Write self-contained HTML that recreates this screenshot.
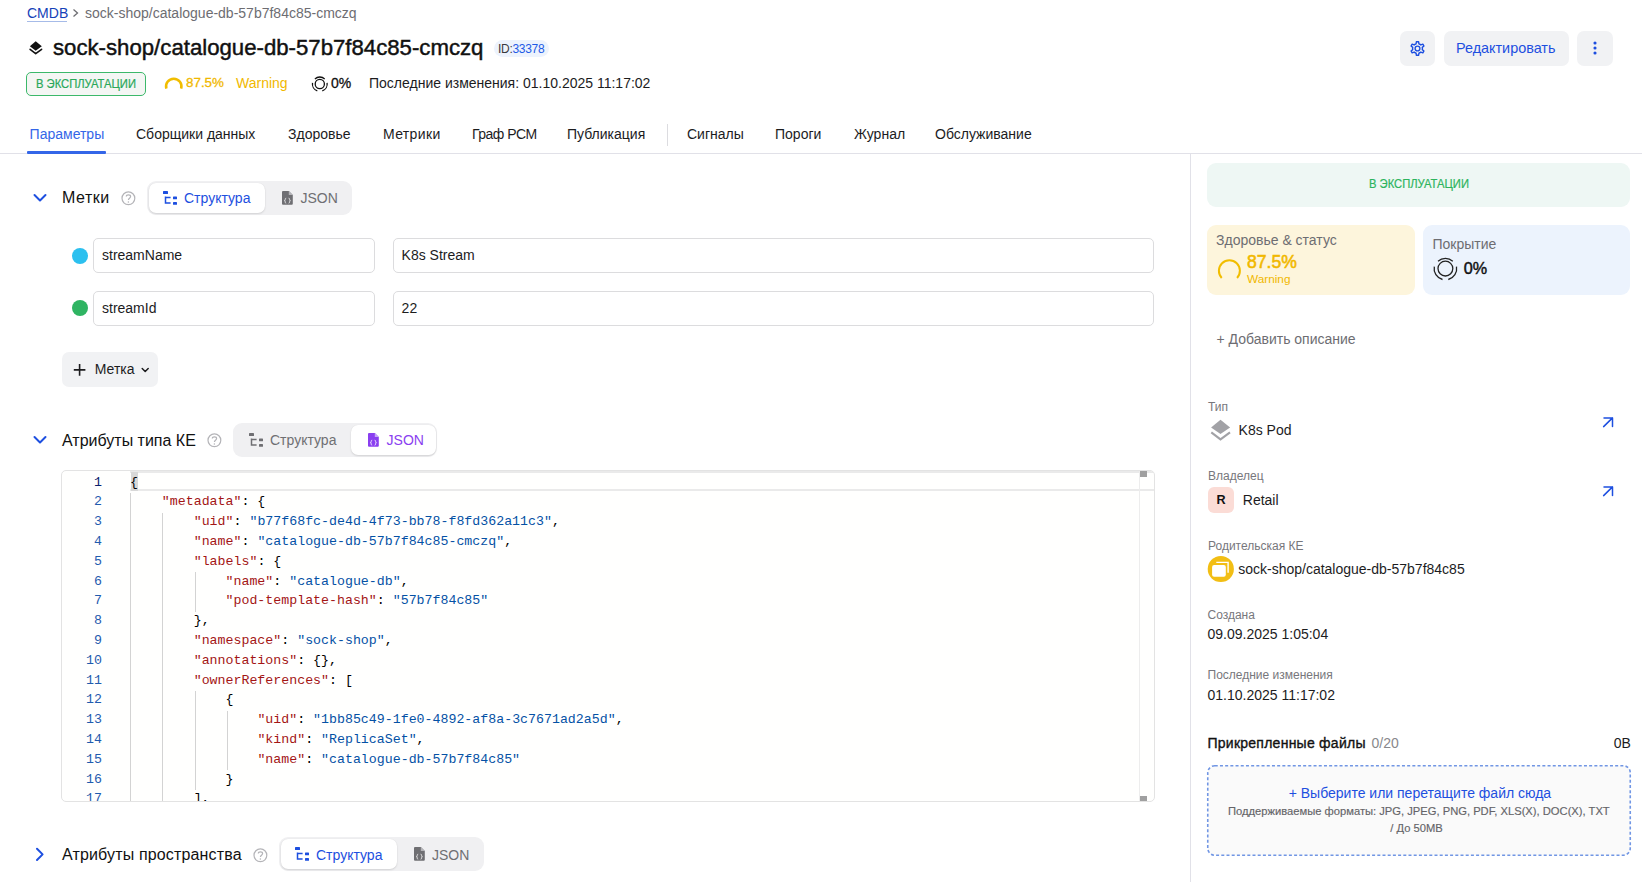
<!DOCTYPE html>
<html><head><meta charset="utf-8">
<style>
*{box-sizing:border-box;margin:0;padding:0}
html,body{width:1642px;height:882px;overflow:hidden;background:#fff}
body{position:relative;font-family:"Liberation Sans",sans-serif;color:#1c1c1e;font-size:14px}
.t{position:absolute;line-height:1;white-space:nowrap}
.a{position:absolute}
.s12{font-size:12px}.s14{font-size:14px}.s16{font-size:16px}
.grey{color:#707075}
.blue{color:#1d4fe0}
svg{position:absolute;overflow:visible}
/* header */
.btn{position:absolute;background:#f1f2f4;border-radius:7px;height:35.2px;top:30.5px}
.seg{position:absolute;background:#f0f0f2;border-radius:9px;height:34px}
.seg .on{position:absolute;top:2px;bottom:2px;background:#fff;border-radius:7px;box-shadow:0 1px 2px rgba(0,0,0,.12),0 0 1px rgba(0,0,0,.08)}
.inp{position:absolute;height:34.5px;border:1px solid #dcdcde;border-radius:5px;background:#fff}
.code .ln{position:absolute;width:40px;text-align:right;font-family:"Liberation Mono",monospace;font-size:13.27px;line-height:19.8px;color:#1f5bae}
.code .cl{position:absolute;left:131px;font-family:"Liberation Mono",monospace;font-size:13.27px;line-height:19.8px;white-space:pre;color:#000}
.k{color:#a31515}.v{color:#0451a5}
.guide{position:absolute;width:1px;background:#d3d3d3}
</style></head><body>

<!-- breadcrumb -->
<div class="t s14" style="left:27px;top:6.3px;color:#1541b8">CMDB</div>
<div class="a" style="left:27px;top:21px;width:40px;height:1px;background:#a6bbe8"></div>
<svg style="left:72px;top:8px" width="8" height="10"><path d="M1.5 1.5 L5.5 5 L1.5 8.5" fill="none" stroke="#6d6d72" stroke-width="1.3"/></svg>
<div class="t s14" style="left:85px;top:6.3px;color:#6d6d72">sock-shop/catalogue-db-57b7f84c85-cmczq</div>

<!-- title -->
<svg style="left:28px;top:40px" width="16" height="16"><path d="M7.7 1.2 L13.8 6.2 L7.7 10.7 L1.9 6.2 Z" fill="#111"/><path d="M2.1 9.3 L7.7 13.7 L13.6 9.3" fill="none" stroke="#111" stroke-width="1.6" stroke-linejoin="round" stroke-linecap="round"/></svg>
<div class="t" style="left:53px;top:37.1px;font-size:22.2px;color:#111;-webkit-text-stroke:0.45px #111">sock-shop/catalogue-db-57b7f84c85-cmczq</div>
<div class="a" style="left:494px;top:39.5px;width:55px;height:17px;border-radius:8.5px;background:#edf3fd"></div>
<div class="t s12" style="left:498px;top:42.5px;color:#3a3a3e;letter-spacing:-0.3px">ID:<span style="color:#1d5ae6">33378</span></div>

<!-- header buttons -->
<div class="btn" style="left:1400px;width:35px"></div>
<div class="btn" style="left:1444px;width:125px"></div>
<div class="btn" style="left:1577px;width:36px"></div>
<div class="t s14 blue" style="left:1456px;top:41px;font-size:14.4px">Редактировать</div>
<svg style="left:1593px;top:40px" width="4" height="16"><circle cx="2" cy="3" r="1.55" fill="#1d4fe0"/><circle cx="2" cy="8" r="1.55" fill="#1d4fe0"/><circle cx="2" cy="13" r="1.55" fill="#1d4fe0"/></svg>

<!-- status row -->
<div class="a" style="left:26px;top:72px;width:120px;height:24px;border:1px solid #3cb86a;border-radius:5px;background:#f4f6f4"></div>
<div class="t s12" style="left:36px;top:78.1px;color:#2aa85a;transform:scaleX(0.935);transform-origin:0 0;-webkit-text-stroke:0.2px #2aa85a">В ЭКСПЛУАТАЦИИ</div>
<svg style="left:164px;top:76px" width="20" height="16"><path d="M2.37 12.55 A7.7 7.7 0 1 1 17.13 12.55" fill="none" stroke="#f1bd00" stroke-width="2.5"/></svg>
<div class="t s14" style="left:186px;top:76.2px;color:#f1b800;font-size:13.4px;-webkit-text-stroke:0.3px #f1b800">87.5%</div>
<div class="t s14" style="left:236px;top:75.9px;color:#f1b800">Warning</div>
<div class="t s14" style="left:331px;top:75.9px;color:#111;-webkit-text-stroke:0.3px #111">0%</div>
<div class="t s14" style="left:369px;top:75.9px;color:#1c1c1e">Последние изменения: 01.10.2025 11:17:02</div>


<svg style="left:1408.8px;top:39.6px" width="17" height="17"><path d="M6.06 4.25 L7.07 3.81 L7.42 1.68 L9.58 1.68 L9.93 3.81 L10.96 4.26 L11.84 4.92 L13.86 4.16 L14.94 6.03 L13.27 7.40 L13.40 8.51 L13.27 9.60 L14.94 10.97 L13.86 12.84 L11.84 12.08 L10.94 12.75 L9.93 13.19 L9.58 15.32 L7.42 15.32 L7.07 13.19 L6.04 12.74 L5.16 12.08 L3.14 12.84 L2.06 10.97 L3.73 9.60 L3.60 8.49 L3.73 7.40 L2.06 6.03 L3.14 4.16 L5.16 4.92 Z" fill="none" stroke="#1d4fe0" stroke-width="1.4" stroke-linejoin="round"/><circle cx="8.5" cy="8.5" r="2.4" fill="none" stroke="#1d4fe0" stroke-width="1.4"/></svg>
<svg style="left:310px;top:75px" width="20" height="18"><circle cx="9.8" cy="9" r="4.6" fill="none" stroke="#111" stroke-width="1.3"/><path d="M4.9 3.9 A7.3 7.3 0 0 1 14.7 3.9 M2.5 7.9 A7.3 7.3 0 0 0 7.3 15.9 M12.3 15.9 A7.3 7.3 0 0 0 17.1 7.9" fill="none" stroke="#111" stroke-width="1.3"/></svg>
<!-- tabs -->
<div class="t s14" style="left:29.6px;top:127.2px;color:#3466e8">Параметры</div>
<div class="t s14" style="left:136px;top:127.2px">Сборщики данных</div>
<div class="t s14" style="left:288px;top:127.2px">Здоровье</div>
<div class="t s14" style="left:383px;top:127.2px;letter-spacing:0.35px">Метрики</div>
<div class="t s14" style="left:472px;top:127.2px;letter-spacing:-0.5px">Граф РСМ</div>
<div class="t s14" style="left:567px;top:127.2px">Публикация</div>
<div class="a" style="left:667px;top:124px;width:1px;height:22px;background:#dcdce0"></div>
<div class="t s14" style="left:687px;top:127.2px">Сигналы</div>
<div class="t s14" style="left:775px;top:127.2px">Пороги</div>
<div class="t s14" style="left:854px;top:127.2px">Журнал</div>
<div class="t s14" style="left:935px;top:127.2px">Обслуживание</div>
<div class="a" style="left:0;top:153px;width:1642px;height:1px;background:#e1e1e8"></div>
<div class="a" style="left:27px;top:151px;width:79px;height:2.5px;background:#3466e8;border-radius:1px"></div>
<div class="a" style="left:1190px;top:154px;width:1px;height:728px;background:#e1e1e8"></div>

<!--MAIN-->
<!-- Метки section -->
<svg style="left:33px;top:193px" width="14" height="10"><path d="M1.5 2 L7 7.5 L12.5 2" fill="none" stroke="#1d4fe0" stroke-width="2" stroke-linecap="round" stroke-linejoin="round"/></svg>
<div class="t s16" style="left:62px;top:189.6px;color:#111;letter-spacing:0.5px">Метки</div>
<svg style="left:121px;top:191px" width="15" height="15"><circle cx="7.4" cy="7.3" r="6.4" fill="none" stroke="#b4b4b8" stroke-width="1.2"/><path d="M5.3 5.6 C5.3 3.2 9.6 3.2 9.6 5.6 C9.6 7.2 7.4 7.2 7.4 9" fill="none" stroke="#b4b4b8" stroke-width="1.2"/><circle cx="7.4" cy="10.9" r="0.75" fill="#b4b4b8"/></svg>
<div class="seg" style="left:147px;top:181px;width:205px">
  <div class="on" style="left:2px;width:116px"></div>
</div>
<svg style="left:162px;top:190px" width="17" height="16"><rect x="1" y="1" width="5" height="3" rx="0.6" fill="#1d4fe0"/><path d="M3.5 6.5 V13 H8.6 M3.5 7.5 H8.6" fill="none" stroke="#1d4fe0" stroke-width="1.5"/><rect x="11" y="6.5" width="4" height="2.8" rx="0.6" fill="#1d4fe0"/><rect x="11" y="12" width="4" height="2.8" rx="0.6" fill="#1d4fe0"/></svg>
<div class="t s14 blue" style="left:184px;top:190.9px">Структура</div>
<svg style="left:281px;top:190px" width="13" height="16"><path d="M2 1 H7.8 L11.8 5 V13.8 Q11.8 14.8 10.8 14.8 H2 Q1 14.8 1 13.8 V2 Q1 1 2 1 Z" fill="#6f6f73"/><path d="M7.8 1 V5 H11.8 Z" fill="#b4b4b8"/><path d="M5.2 8.2 Q4.2 8.2 4.2 9.2 V10 Q4.2 10.7 3.4 10.7 Q4.2 10.7 4.2 11.4 V12.2 Q4.2 13.2 5.2 13.2 M7.6 8.2 Q8.6 8.2 8.6 9.2 V10 Q8.6 10.7 9.4 10.7 Q8.6 10.7 8.6 11.4 V12.2 Q8.6 13.2 7.6 13.2" fill="none" stroke="#e6e6e8" stroke-width="0.9"/></svg>
<div class="t s14" style="left:300.5px;top:190.9px;color:#6f6f73">JSON</div>

<!-- label rows -->
<div class="a" style="left:72px;top:248px;width:16px;height:16px;border-radius:50%;background:#2cc0ef"></div>
<div class="inp" style="left:93px;top:238px;width:282px"></div>
<div class="t s14" style="left:102px;top:247.9px">streamName</div>
<div class="inp" style="left:392.5px;top:238px;width:761px"></div>
<div class="t s14" style="left:401.6px;top:247.9px">K8s Stream</div>
<div class="a" style="left:72px;top:300px;width:16px;height:16px;border-radius:50%;background:#2fb462"></div>
<div class="inp" style="left:93px;top:291px;width:282px"></div>
<div class="t s14" style="left:102px;top:300.9px">streamId</div>
<div class="inp" style="left:392.5px;top:291px;width:761px"></div>
<div class="t s14" style="left:401.6px;top:300.9px">22</div>

<!-- + Метка -->
<div class="a" style="left:62px;top:352px;width:96px;height:35px;border-radius:7px;background:#f1f2f4"></div>
<svg style="left:73px;top:363px" width="14" height="14"><path d="M6.6 1 V12.8 M0.8 6.9 H12.4" fill="none" stroke="#1c1c1e" stroke-width="1.6"/></svg>
<div class="t s14" style="left:94.8px;top:362.4px">Метка</div>
<svg style="left:141px;top:367px" width="9" height="7"><path d="M1.2 1.5 L4.2 4.5 L7.2 1.5" fill="none" stroke="#1c1c1e" stroke-width="1.5" stroke-linecap="round" stroke-linejoin="round"/></svg>

<!-- Атрибуты типа КЕ -->
<svg style="left:33px;top:435px" width="14" height="10"><path d="M1.5 2 L7 7.5 L12.5 2" fill="none" stroke="#1d4fe0" stroke-width="2" stroke-linecap="round" stroke-linejoin="round"/></svg>
<div class="t s16" style="left:62px;top:433px;color:#111">Атрибуты типа КЕ</div>
<svg style="left:207px;top:433px" width="15" height="15"><circle cx="7.4" cy="7.3" r="6.4" fill="none" stroke="#b4b4b8" stroke-width="1.2"/><path d="M5.3 5.6 C5.3 3.2 9.6 3.2 9.6 5.6 C9.6 7.2 7.4 7.2 7.4 9" fill="none" stroke="#b4b4b8" stroke-width="1.2"/><circle cx="7.4" cy="10.9" r="0.75" fill="#b4b4b8"/></svg>
<div class="seg" style="left:233px;top:423px;width:204px">
  <div class="on" style="left:118px;width:85px"></div>
</div>
<svg style="left:248px;top:432px" width="17" height="16"><rect x="1" y="1" width="5" height="3" rx="0.6" fill="#6f6f73"/><path d="M3.5 6.5 V13 H8.6 M3.5 7.5 H8.6" fill="none" stroke="#6f6f73" stroke-width="1.5"/><rect x="11" y="6.5" width="4" height="2.8" rx="0.6" fill="#6f6f73"/><rect x="11" y="12" width="4" height="2.8" rx="0.6" fill="#6f6f73"/></svg>
<div class="t s14" style="left:270px;top:432.8px;color:#6f6f73">Структура</div>
<svg style="left:367px;top:432px" width="13" height="16"><path d="M2 1 H7.8 L11.8 5 V13.8 Q11.8 14.8 10.8 14.8 H2 Q1 14.8 1 13.8 V2 Q1 1 2 1 Z" fill="#8a3ff0"/><path d="M7.8 1 V5 H11.8 Z" fill="#c6a6f7"/><path d="M5.2 8.2 Q4.2 8.2 4.2 9.2 V10 Q4.2 10.7 3.4 10.7 Q4.2 10.7 4.2 11.4 V12.2 Q4.2 13.2 5.2 13.2 M7.6 8.2 Q8.6 8.2 8.6 9.2 V10 Q8.6 10.7 9.4 10.7 Q8.6 10.7 8.6 11.4 V12.2 Q8.6 13.2 7.6 13.2" fill="none" stroke="#efe6fd" stroke-width="0.9"/></svg>
<div class="t s14" style="left:386.6px;top:432.8px;color:#8a3ff0">JSON</div>

<!-- editor -->
<div class="a code" style="left:61px;top:470px;width:1094px;height:332.3px;border:1px solid #e3e3e3;border-radius:5px;background:#fffffe;overflow:hidden">
  <div class="a" style="left:68px;top:0px;width:1030px;height:20px;border-top:2px solid #eaeaea;border-bottom:2px solid #eaeaea"></div>
  <div class="a" style="left:69px;top:1px;width:6.7px;height:19px;background:#d8d8d8"></div>
  <div class="guide" style="left:67.6px;top:22.10px;height:309.90px"></div><div class="guide" style="left:100.4px;top:41.90px;height:290.10px"></div><div class="guide" style="left:132.5px;top:101.30px;height:39.60px"></div><div class="guide" style="left:132.5px;top:220.10px;height:99.00px"></div><div class="guide" style="left:164.6px;top:239.90px;height:59.40px"></div>
  <div class="ln" style="left:0;top:1.60px;color:#0b216f">1</div>
<div class="cl" style="left:68px;top:1.60px">{</div>
<div class="ln" style="left:0;top:21.40px;color:#1f5bae">2</div>
<div class="cl" style="left:68px;top:21.40px">    <span class="k">"metadata"</span>: {</div>
<div class="ln" style="left:0;top:41.20px;color:#1f5bae">3</div>
<div class="cl" style="left:68px;top:41.20px">        <span class="k">"uid"</span>: <span class="v">"b77f68fc-de4d-4f73-bb78-f8fd362a11c3"</span>,</div>
<div class="ln" style="left:0;top:61.00px;color:#1f5bae">4</div>
<div class="cl" style="left:68px;top:61.00px">        <span class="k">"name"</span>: <span class="v">"catalogue-db-57b7f84c85-cmczq"</span>,</div>
<div class="ln" style="left:0;top:80.80px;color:#1f5bae">5</div>
<div class="cl" style="left:68px;top:80.80px">        <span class="k">"labels"</span>: {</div>
<div class="ln" style="left:0;top:100.60px;color:#1f5bae">6</div>
<div class="cl" style="left:68px;top:100.60px">            <span class="k">"name"</span>: <span class="v">"catalogue-db"</span>,</div>
<div class="ln" style="left:0;top:120.40px;color:#1f5bae">7</div>
<div class="cl" style="left:68px;top:120.40px">            <span class="k">"pod-template-hash"</span>: <span class="v">"57b7f84c85"</span></div>
<div class="ln" style="left:0;top:140.20px;color:#1f5bae">8</div>
<div class="cl" style="left:68px;top:140.20px">        },</div>
<div class="ln" style="left:0;top:160.00px;color:#1f5bae">9</div>
<div class="cl" style="left:68px;top:160.00px">        <span class="k">"namespace"</span>: <span class="v">"sock-shop"</span>,</div>
<div class="ln" style="left:0;top:179.80px;color:#1f5bae">10</div>
<div class="cl" style="left:68px;top:179.80px">        <span class="k">"annotations"</span>: {},</div>
<div class="ln" style="left:0;top:199.60px;color:#1f5bae">11</div>
<div class="cl" style="left:68px;top:199.60px">        <span class="k">"ownerReferences"</span>: [</div>
<div class="ln" style="left:0;top:219.40px;color:#1f5bae">12</div>
<div class="cl" style="left:68px;top:219.40px">            {</div>
<div class="ln" style="left:0;top:239.20px;color:#1f5bae">13</div>
<div class="cl" style="left:68px;top:239.20px">                <span class="k">"uid"</span>: <span class="v">"1bb85c49-1fe0-4892-af8a-3c7671ad2a5d"</span>,</div>
<div class="ln" style="left:0;top:259.00px;color:#1f5bae">14</div>
<div class="cl" style="left:68px;top:259.00px">                <span class="k">"kind"</span>: <span class="v">"ReplicaSet"</span>,</div>
<div class="ln" style="left:0;top:278.80px;color:#1f5bae">15</div>
<div class="cl" style="left:68px;top:278.80px">                <span class="k">"name"</span>: <span class="v">"catalogue-db-57b7f84c85"</span></div>
<div class="ln" style="left:0;top:298.60px;color:#1f5bae">16</div>
<div class="cl" style="left:68px;top:298.60px">            }</div>
<div class="ln" style="left:0;top:318.40px;color:#1f5bae">17</div>
<div class="cl" style="left:68px;top:318.40px">        ],</div>
  <div class="a" style="left:1077px;top:0;width:1px;height:333px;background:#ededed"></div>
  <div class="a" style="left:1077.6px;top:0;width:7px;height:6px;background:#a0a0a0"></div>
  <div class="a" style="left:1077.6px;top:324.5px;width:7px;height:6px;background:#a0a0a0"></div>
</div>

<!-- Атрибуты пространства -->
<svg style="left:34px;top:847px" width="12" height="15"><path d="M3 1.8 L8.6 7.4 L3 13" fill="none" stroke="#1d4fe0" stroke-width="2" stroke-linecap="round" stroke-linejoin="round"/></svg>
<div class="t s16" style="left:62px;top:847.1px;color:#111;letter-spacing:0.15px">Атрибуты пространства</div>
<svg style="left:253px;top:848px" width="15" height="15"><circle cx="7.4" cy="7.3" r="6.4" fill="none" stroke="#b4b4b8" stroke-width="1.2"/><path d="M5.3 5.6 C5.3 3.2 9.6 3.2 9.6 5.6 C9.6 7.2 7.4 7.2 7.4 9" fill="none" stroke="#b4b4b8" stroke-width="1.2"/><circle cx="7.4" cy="10.9" r="0.75" fill="#b4b4b8"/></svg>
<div class="seg" style="left:279px;top:837px;width:205px">
  <div class="on" style="left:2px;width:116px"></div>
</div>
<svg style="left:294px;top:846px" width="17" height="16"><rect x="1" y="1" width="5" height="3" rx="0.6" fill="#1d4fe0"/><path d="M3.5 6.5 V13 H8.6 M3.5 7.5 H8.6" fill="none" stroke="#1d4fe0" stroke-width="1.5"/><rect x="11" y="6.5" width="4" height="2.8" rx="0.6" fill="#1d4fe0"/><rect x="11" y="12" width="4" height="2.8" rx="0.6" fill="#1d4fe0"/></svg>
<div class="t s14 blue" style="left:316px;top:847.9px">Структура</div>
<svg style="left:413px;top:846px" width="13" height="16"><path d="M2 1 H7.8 L11.8 5 V13.8 Q11.8 14.8 10.8 14.8 H2 Q1 14.8 1 13.8 V2 Q1 1 2 1 Z" fill="#6f6f73"/><path d="M7.8 1 V5 H11.8 Z" fill="#b4b4b8"/><path d="M5.2 8.2 Q4.2 8.2 4.2 9.2 V10 Q4.2 10.7 3.4 10.7 Q4.2 10.7 4.2 11.4 V12.2 Q4.2 13.2 5.2 13.2 M7.6 8.2 Q8.6 8.2 8.6 9.2 V10 Q8.6 10.7 9.4 10.7 Q8.6 10.7 8.6 11.4 V12.2 Q8.6 13.2 7.6 13.2" fill="none" stroke="#e6e6e8" stroke-width="0.9"/></svg>
<div class="t s14" style="left:432px;top:847.9px;color:#6f6f73">JSON</div>
<!--/MAIN-->

<!--RIGHT-->
<!-- right panel -->
<div class="a" style="left:1207px;top:163px;width:423px;height:44px;border-radius:9px;background:#eef7f4"></div>
<div class="t s12" style="left:1369px;top:178.3px;color:#2db45e;transform:scaleX(0.935);transform-origin:0 0;-webkit-text-stroke:0.2px #2db45e">В ЭКСПЛУАТАЦИИ</div>

<div class="a" style="left:1207px;top:225px;width:208px;height:70px;border-radius:9px;background:#fdf5dc"></div>
<div class="t s14" style="left:1216px;top:233px;color:#6d6d72">Здоровье &amp; статус</div>
<svg style="left:1216px;top:257px" width="26" height="24"><path d="M5.72 21 A10.5 10.5 0 1 1 21.08 21" fill="none" stroke="#f1bd00" stroke-width="2"/></svg>
<div class="t s16" style="left:1247px;top:253.6px;color:#f1b800;font-size:17.6px;-webkit-text-stroke:0.55px #f1b800">87.5%</div>
<div class="t s12" style="left:1247px;top:273.6px;color:#f1b800;font-size:11.8px">Warning</div>

<div class="a" style="left:1423px;top:225px;width:207px;height:70px;border-radius:9px;background:#ecf3fd"></div>
<div class="t s14" style="left:1432.5px;top:236.9px;color:#6d6d72">Покрытие</div>
<svg style="left:1433px;top:256px" width="26" height="26"><circle cx="12.4" cy="12.6" r="7.4" fill="none" stroke="#222" stroke-width="1.3"/><path d="M5.0 5.2 A11.3 11.3 0 0 1 19.8 5.2 M1.3 10.6 A11.3 11.3 0 0 0 9.5 23.5 M15.3 23.5 A11.3 11.3 0 0 0 23.5 10.6" fill="none" stroke="#222" stroke-width="1.3"/></svg>
<div class="t s16" style="left:1463.8px;top:259.8px;color:#111;font-size:16.2px;-webkit-text-stroke:0.45px #111">0%</div>

<div class="t s14" style="left:1216.5px;top:331.8px;color:#6d6d72">+ Добавить описание</div>

<div class="t s12" style="left:1208px;top:401.3px;color:#77777c">Тип</div>
<svg style="left:1208px;top:416px" width="26" height="26"><path d="M12.5 3.8 L22.1 11.4 L12.5 18 L3.1 11.4 Z" fill="#a2a2a6"/><path d="M3.3 16.3 L12.5 23.4 L22 16.3" fill="none" stroke="#a2a2a6" stroke-width="2.1"/></svg>
<div class="t s14" style="left:1238.6px;top:422.9px">K8s Pod</div>
<svg style="left:1600px;top:414px" width="16" height="16"><path d="M3.6 12.6 L12.5 3.9 M4 4 H12.5 V12.5" fill="none" stroke="#1d4fe0" stroke-width="1.5" stroke-linecap="round" stroke-linejoin="round"/></svg>

<div class="t s12" style="left:1208px;top:470.3px;color:#77777c">Владелец</div>
<div class="a" style="left:1208px;top:487px;width:26px;height:26px;border-radius:6px;background:#fbdcd6"></div>
<div class="t s14" style="left:1216.6px;top:494.2px;font-weight:bold;color:#111;font-size:12.6px">R</div>
<div class="t s14" style="left:1242.8px;top:492.6px">Retail</div>
<svg style="left:1600px;top:483px" width="16" height="16"><path d="M3.6 12.6 L12.5 3.9 M4 4 H12.5 V12.5" fill="none" stroke="#1d4fe0" stroke-width="1.5" stroke-linecap="round" stroke-linejoin="round"/></svg>

<div class="t s12" style="left:1208px;top:539.9px;color:#77777c">Родительская КЕ</div>
<svg style="left:1207px;top:555px" width="28" height="28"><circle cx="13.8" cy="14" r="13.1" fill="#f2be14"/><rect x="5.1" y="9.9" width="13.7" height="11.8" rx="2" fill="#fff"/><path d="M9.3 7.4 H21.1 V17.8" fill="none" stroke="#fff" stroke-width="1.4"/></svg>
<div class="t s14" style="left:1238.2px;top:561.7px">sock-shop/catalogue-db-57b7f84c85</div>

<div class="t s12" style="left:1207.5px;top:608.6px;color:#77777c">Создана</div>
<div class="t s14" style="left:1207.5px;top:626.9px">09.09.2025 1:05:04</div>
<div class="t s12" style="left:1207.5px;top:669.2px;color:#77777c">Последние изменения</div>
<div class="t s14" style="left:1207.5px;top:687.5px">01.10.2025 11:17:02</div>

<div class="t s14" style="left:1207.5px;top:736.2px;color:#111;letter-spacing:0.25px;-webkit-text-stroke:0.35px #111">Прикрепленные файлы</div><div class="t s14" style="left:1371.5px;top:736.2px;color:#88888c">0/20</div>
<div class="t s14" style="left:1613.8px;top:736.2px">0B</div>
<svg style="left:1206px;top:764px" width="426" height="93"><rect x="1.75" y="1.75" width="422.5" height="89.5" rx="7" fill="#fafafa" stroke="#7196e4" stroke-width="1.6" stroke-dasharray="3 2.2"/></svg>
<div class="t s14" style="left:1288.7px;top:786.2px;color:#1d4fe0;font-size:14px">+ Выберите или перетащите файл сюда</div>
<div class="t" style="left:1228px;top:805.7px;color:#646468;font-size:11.2px;-webkit-text-stroke:0.15px #646468">Поддерживаемые форматы: JPG, JPEG, PNG, PDF, XLS(X), DOC(X), TXT</div>
<div class="t" style="left:1390.3px;top:822.9px;color:#646468;font-size:11.2px;-webkit-text-stroke:0.15px #646468">/ До 50MB</div>
<!--/RIGHT-->

</body></html>
